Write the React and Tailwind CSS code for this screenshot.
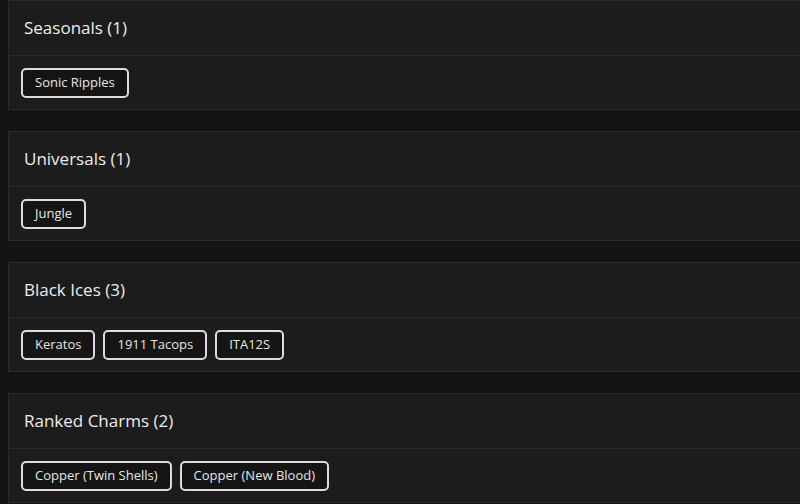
import React from 'react'

const sections = [
    { title: 'Seasonals (1)', items: ['Sonic Ripples'] },
    { title: 'Universals (1)', items: ['Jungle'] },
    { title: 'Black Ices (3)', items: ['Keratos', '1911 Tacops', 'ITA12S'] },
    { title: 'Ranked Charms (2)', items: ['Copper (Twin Shells)', 'Copper (New Blood)'] },
]

const Section = ({ title, items }) => {
    return (
        <div className="w-[800px] h-[110px] bg-[#1c1c1c] border border-[#2b2b2b] flex flex-col">
            <div className="h-[55px] flex items-center px-[15px] border-b border-[#2b2b2b]">
                <h2 className="text-[17px] text-[#ececec] font-medium">{title}</h2>
            </div>
            <div className="flex-1 flex items-start gap-2 px-3 pt-3">
                {items.map((item) => (
                    <span key={item} className="h-[30px] px-[12px] flex items-center bg-[#151515] border-2 border-[#dcdcdc] rounded-[5px] text-[13px] text-[#e6e6e6]">
                        {item}
                    </span>
                ))}
            </div>
        </div>
    )
}

const App = () => {
    return (
        <div className="w-full min-h-screen bg-[#141414] pl-2 flex flex-col gap-[21px] overflow-hidden" style={{ fontFamily: '"Open Sans", sans-serif' }}>
            {sections.map((s) => (
                <Section key={s.title} {...s} />
            ))}
        </div>
    )
}

export default App
